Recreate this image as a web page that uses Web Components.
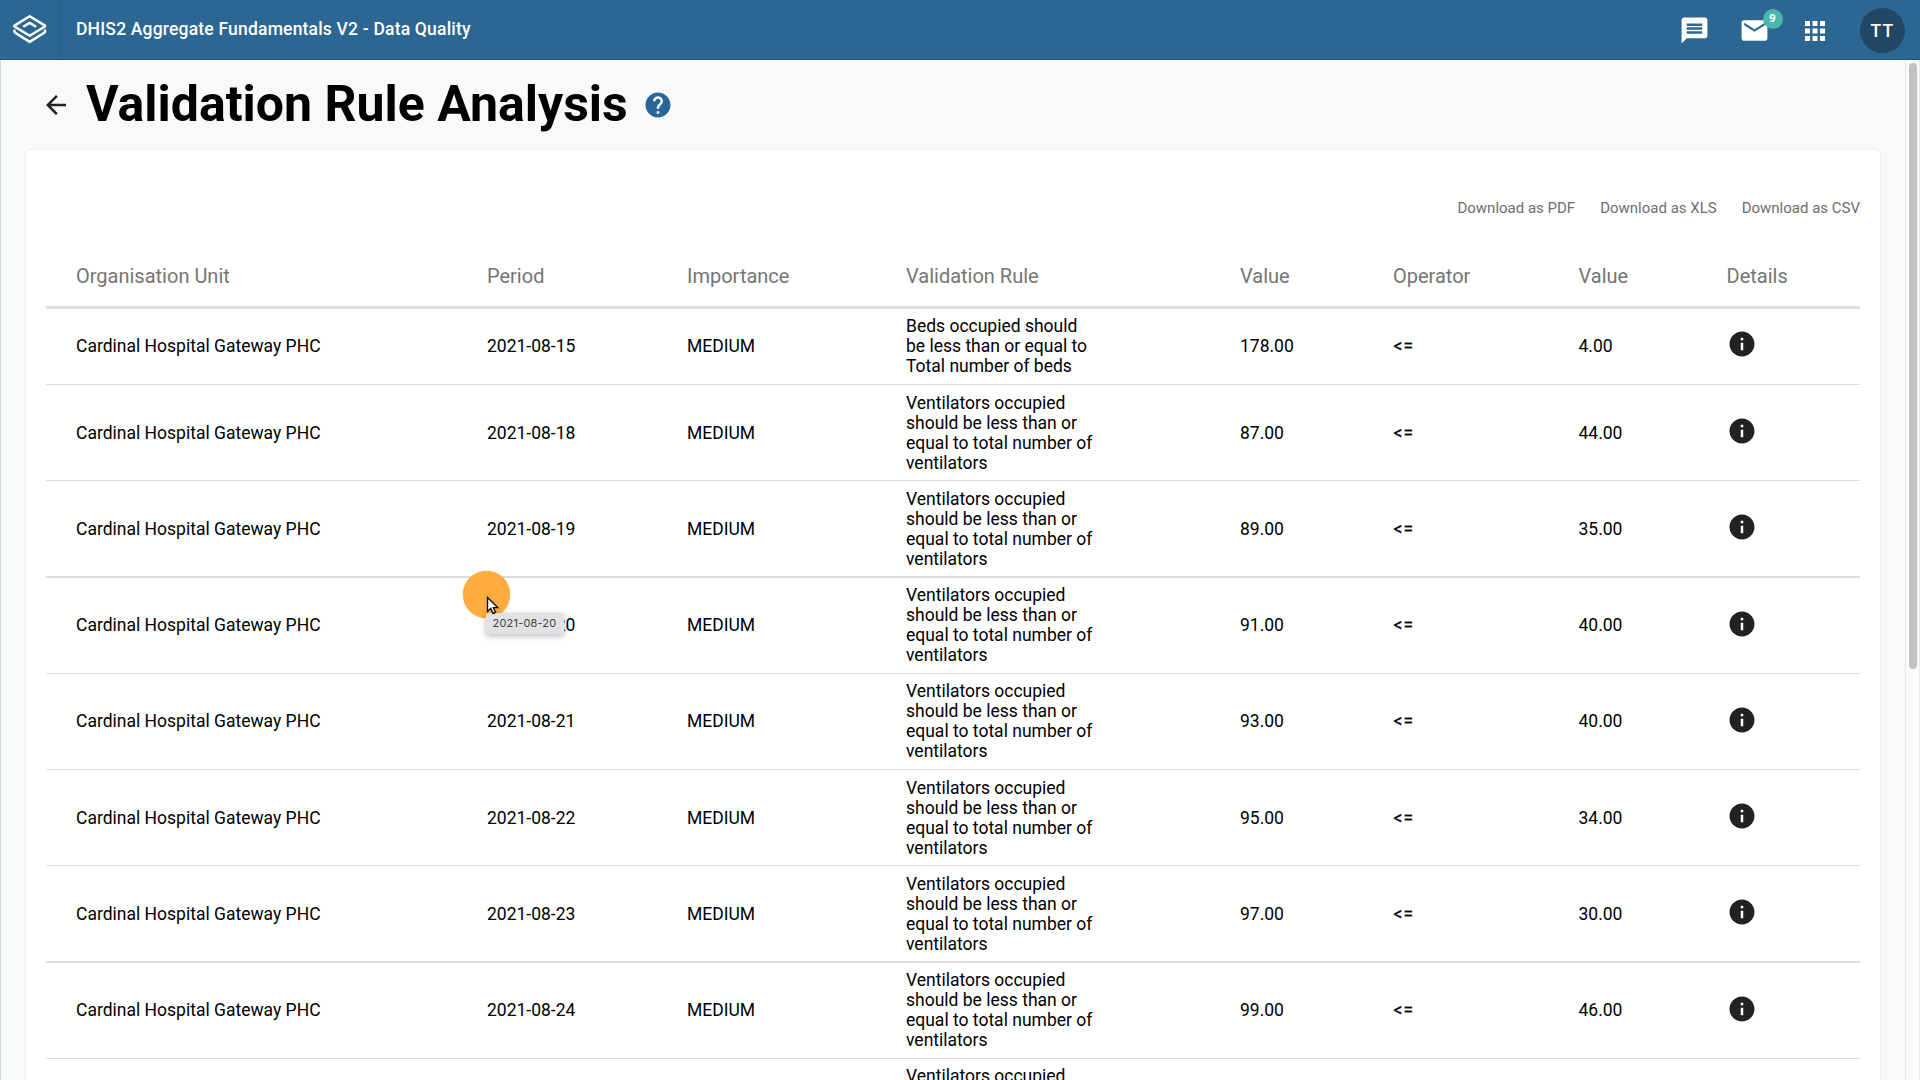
<!DOCTYPE html>
<html lang="en"><head><meta charset="utf-8"><title>Data Quality</title>
<style>
html,body{margin:0;height:100%;overflow:hidden;font-family:Roboto,"Liberation Sans",sans-serif;background:#fff}
</style></head><body>
<dq-app></dq-app>
<script>
const define=(name,html,setup)=>customElements.define(name,class extends HTMLElement{
  connectedCallback(){
    if(this.shadowRoot)return;
    this.attachShadow({mode:'open'}).innerHTML=html;
    if(setup)setup(this,this.shadowRoot);
  }
});

define('dq-header',`<style>
:host{display:flex;height:60px;background:#2c6693;border-bottom:1px solid #235379;box-sizing:border-box;color:#fff;align-items:center;flex:none}
.logo{width:60px;height:59px;border-right:1px solid #265a82;display:flex;flex:none}
.logo svg{margin:13px 0 0 12.300px}
.title{margin:-2px auto 0 15px;font-size:17.5px;font-weight:500;line-height:22px;letter-spacing:.19px;white-space:nowrap}
.item{width:60px;height:60px;display:flex;align-items:center;justify-content:center;position:relative}
.item svg{display:block;margin-top:2px}
.badge{position:absolute;left:38px;top:9px;width:20px;height:20px;border-radius:50%;background:#4db6ac;font:700 11px/18px "Open Sans",sans-serif;text-align:center;text-indent:-1px}
.avatar{width:45px;height:45px;border-radius:50%;background:#204765;margin:1px 15px 0 15px;font-size:17.5px;font-weight:500;line-height:46px;text-align:center;letter-spacing:1.2px}
</style>
<div class="logo"><svg width="36" height="33" viewBox="0 0 36 33" fill="none" stroke="#fff" stroke-width="2.500" stroke-linejoin="round" stroke-linecap="round"><path d="M17.700 3.300 32.600 12.400Q33.700 13 32.600 13.700L17.700 22.700 2.800 13.700Q1.700 13 2.800 12.400zM2.400 17.600Q2 18.900 3.200 19.700L17.700 28.900 32.200 19.700Q33.400 18.900 33 17.600"/><path d="M11.200 13.800 17.700 9.900 24.200 13.800" stroke-linecap="butt"/></svg></div>
<div class="title">DHIS2 Aggregate Fundamentals V2 - Data Quality</div>
<div class="item"><svg width="31" height="31" viewBox="0 0 24 24" fill="#fff" style="margin-left:-1px"><path d="M20 2H4c-1.100 0-2 .9-2 2v18l4-4h14c1.100 0 2-.9 2-2V4c0-1.100-.9-2-2-2zM6 6.500h12v2H6zM6 9.500h12v2H6zM6 12.500h12v2H6z" fill-rule="evenodd"/></svg></div>
<div class="item"><svg width="31" height="31" viewBox="0 0 24 24" fill="#fff" style="margin-left:-1px"><path d="M20 4H4c-1.100 0-2 .9-2 2v12c0 1.100.9 2 2 2h16c1.100 0 2-.9 2-2V6c0-1.100-.9-2-2-2zm0 4-8 5-8-5V6l8 5 8-5v2z"/></svg><span class="badge">9</span></div>
<div class="item"><svg width="30" height="30" viewBox="0 0 24 24" fill="#fff"><path d="M4 8h4V4H4v4zm6 12h4v-4h-4v4zm-6 0h4v-4H4v4zm0-6h4v-4H4v4zm6 0h4v-4h-4v4zm6-10v4h4V4h-4zm-6 4h4V4h-4v4zm6 6h4v-4h-4v4zm0 6h4v-4h-4v4z"/></svg></div>
<div class="avatar">TT</div>`);

define('dq-heading',`<style>
:host{display:flex;align-items:center;height:90px;padding-left:40px}
svg{display:block;flex:none}
h1{margin:-3px 15px 0 15px;font-size:50px;font-weight:700;line-height:60px;color:#000;white-space:nowrap}
</style>
<svg width="30" height="30" viewBox="0 0 24 24" fill="#222"><path d="M20 11H7.830l5.590-5.590L12 4l-8 8 8 8 1.410-1.410L7.830 13H20v-2z"/></svg>
<h1><slot></slot></h1>
<svg width="30" height="30" viewBox="0 0 24 24" fill="#276696"><path d="M12 2C6.480 2 2 6.480 2 12s4.480 10 10 10 10-4.480 10-10S17.520 2 12 2zm1 17h-2v-2h2v2zm2.070-7.750-.9.920C13.450 12.900 13 13.500 13 15h-2v-.5c0-1.100.45-2.100 1.170-2.830l1.240-1.260c.37-.36.59-.86.59-1.410 0-1.100-.9-2-2-2s-2 .9-2 2H8c0-2.210 1.790-4 4-4s4 1.790 4 4c0 .88-.36 1.680-.93 2.250z"/></svg>`);

const cols='grid-template-columns:30px 411px 200px 219px 334px 153px 185.500px 148px 1fr';
define('dq-row',`<style>
:host{display:grid;${cols};align-items:center;height:96px;box-sizing:border-box;border-bottom:1px solid #dcdcdc;font-size:17.500px;line-height:20px;color:#000}
:host([short]){height:76px;padding-bottom:2px}
:host([thick]){height:97px;border-bottom-width:2px}
:host([raised]) > *{}
:host([raised]){padding-bottom:1px}
.rule{width:200px;white-space:pre-line}
.op{letter-spacing:1px;padding-left:.5px;-webkit-text-stroke:.25px #000}
svg{display:block;margin-top:-3px}
</style><span></span><span>Cardinal Hospital Gateway PHC</span><span id="d"></span><span>MEDIUM</span><span class="rule" id="r"></span><span id="a"></span><span class="op">&lt;=</span><span id="b"></span>
<svg width="30" height="30" viewBox="0 0 24 24" fill="#222"><path d="M12 2C6.480 2 2 6.480 2 12s4.480 10 10 10 10-4.480 10-10S17.520 2 12 2zm1 15h-2v-6h2v6zm0-8h-2V7h2v2z"/></svg>`,
(h,s)=>{
 s.getElementById('d').textContent=h.getAttribute('period');
 s.getElementById('a').textContent=h.getAttribute('left');
 s.getElementById('b').textContent=h.getAttribute('right');
 s.getElementById('r').textContent=h.hasAttribute('short')?'Beds occupied should\nbe less than or equal to\nTotal number of beds':'Ventilators occupied\nshould be less than or\nequal to total number of\nventilators';
});

define('dq-table',`<style>
:host{display:block}
.head{display:grid;${cols};height:62px;box-sizing:content-box;align-items:center;border-bottom:3px solid #e0e0e0;font-size:20px;line-height:24px;color:#757575}
.head span{padding-top:2px}
</style><div class="head"><span></span><span>Organisation Unit</span><span>Period</span><span>Importance</span><span>Validation Rule</span><span>Value</span><span>Operator</span><span>Value</span><span>Details</span></div>
<dq-row short period="2021-08-15" left="178.00" right="4.00"></dq-row>`,
(h,s)=>{
 const extra={19:'thick',23:'thick',20:'raised',21:'raised',24:'raised',25:'raised'};
 for(const [p,a,b] of [['18','87','44'],['19','89','35'],['20','91','40'],['21','93','40'],['22','95','34'],['23','97','30'],['24','99','46'],['25','101','42']])
  s.innerHTML+=`<dq-row ${extra[p]||''} period="2021-08-${p}" left="${a}.00" right="${b}.00"></dq-row>`;
});

define('dq-card',`<style>
:host{display:block;width:1854px;height:1200px;background:#fff;border-radius:4px;box-shadow:0 0 2px rgba(0,0,0,.16);box-sizing:border-box;padding:46px 20px 0}
nav{display:flex;justify-content:flex-end;gap:25px;font-size:15px;line-height:24px;color:#6e6e6e;margin-bottom:24px;height:24px}
</style><nav><span>Download as PDF</span><span>Download as XLS</span><span>Download as CSV</span></nav><dq-table></dq-table>`);

define('dq-scrollbar',`<style>
:host{display:block;width:15px;box-sizing:border-box;border-left:1px solid #e6e6e6;border-right:1px solid #ececec;background:#fafafa;padding:3px 0 0 3px;flex:none}
div{width:8px;height:606px;border-radius:4px;background:#c1c1c1}
</style><div></div>`);

define('dq-pointer',`<style>
:host{position:absolute;left:463px;top:571px;display:block}
.halo{width:46.500px;height:46.500px;margin:.3px 0 0 .3px;border-radius:50%;background:#feab40;box-shadow:0 0 1px #feab40}
svg{position:absolute;left:23px;top:25px}
.tip{position:absolute;left:23px;top:42px;width:78px;height:21px;box-sizing:border-box;border-radius:2px;background:#e2e1e4;box-shadow:0 2px 6px rgba(0,0,0,.28);font:11px/20px Inter,sans-serif;letter-spacing:.18px;text-indent:-1px;color:#444;text-align:center;white-space:nowrap}
</style><div class="halo"></div><div class="tip">2021-08-20</div>
<svg width="14" height="20" viewBox="0 0 14 20"><path d="M1.500 1.500v14l3.300-3 2.300 5 2.500-1.100-2.200-4.800h4.300z" fill="#fff" stroke="#111" stroke-width="1.400"/></svg>`);

define('dq-app',`<style>
:host{display:flex;flex-direction:column;height:1080px;width:1920px;overflow:hidden;position:relative}
.body{display:flex;flex:1;min-height:0}
main{flex:1;overflow:hidden;background:#f8f9fb;border-left:1px solid #ccd8e4;box-sizing:border-box}
dq-card{margin-left:25px}
</style><dq-header></dq-header><div class="body"><main><dq-heading>Validation Rule Analysis</dq-heading><dq-card></dq-card></main><dq-scrollbar></dq-scrollbar></div><dq-pointer></dq-pointer>`);
</script></body></html>
